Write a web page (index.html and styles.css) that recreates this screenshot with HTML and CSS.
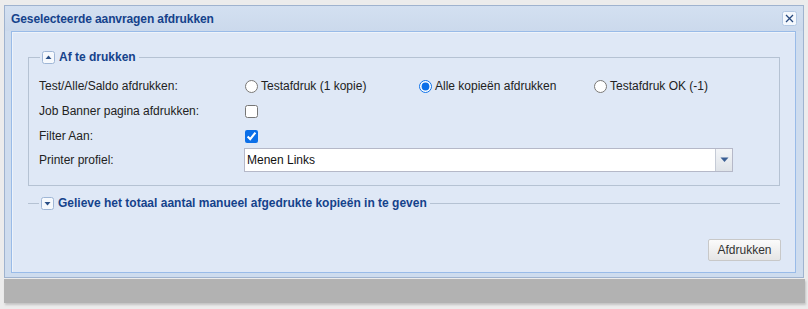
FILE: index.html
```html
<!DOCTYPE html>
<html lang="nl">
<head>
<meta charset="utf-8">
<title>Geselecteerde aanvragen afdrukken</title>
<link rel="stylesheet" href="styles.css">
</head>
<body>
<div class="window">
  <div class="header">
    <span class="title">Geselecteerde aanvragen afdrukken</span>
    <span class="close">
      <svg width="15" height="15" viewBox="0 0 15 15"><rect x="0.5" y="0.5" width="14" height="14" rx="2" fill="#f4f8fd" stroke="#b3c8e3"/><path d="M4 4 L11 11 M11 4 L4 11" stroke="#284a7e" stroke-width="1.3"/></svg>
    </span>
  </div>
  <div class="body">
    <fieldset class="fs">
      <legend class="lg">
        <svg class="tog" width="13" height="13" viewBox="0 0 13 13"><rect x="0.5" y="0.5" width="12" height="12" rx="2" fill="#f6f9fd" stroke="#9fb6d6"/><path d="M3.5 8 L6.5 4.5 L9.5 8 Z" fill="#2a4f86"/></svg>
        <span>Af te drukken</span>
      </legend>
      <div class="form">
        <div class="lbl">Test/Alle/Saldo afdrukken:</div>
        <div class="radios">
          <label class="opt"><input type="radio" name="m"><span>Testafdruk (1 kopie)</span></label>
          <label class="opt"><input type="radio" name="m" checked><span>Alle kopieën afdrukken</span></label>
          <label class="opt"><input type="radio" name="m"><span>Testafdruk OK (-1)</span></label>
        </div>
        <div class="lbl">Job Banner pagina afdrukken:</div>
        <div class="fld"><input type="checkbox" class="cb"></div>
        <div class="lbl">Filter Aan:</div>
        <div class="fld"><input type="checkbox" class="cb" checked></div>
        <div class="lbl">Printer profiel:</div>
        <div class="fld">
          <div class="combo">
            <span class="combo-text">Menen Links</span>
            <span class="trigger"><svg width="9" height="6" viewBox="0 0 9 6"><path d="M0.5 0.5 L4.5 5 L8.5 0.5 Z" fill="#3b5f94"/></svg></span>
          </div>
        </div>
      </div>
    </fieldset>
    <fieldset class="fs collapsed">
      <legend class="lg">
        <svg class="tog" width="13" height="13" viewBox="0 0 13 13"><rect x="0.5" y="0.5" width="12" height="12" rx="2" fill="#f6f9fd" stroke="#9fb6d6"/><path d="M3.5 5 L6.5 8.5 L9.5 5 Z" fill="#2a4f86"/></svg>
        <span>Gelieve het totaal aantal manueel afgedrukte kopieën in te geven</span>
      </legend>
    </fieldset>
    <div class="footer">
      <button class="btn" type="button">Afdrukken</button>
    </div>
  </div>
</div>
<div class="shadow"></div>
</body>
</html>
```
FILE: styles.css
```css
html, body {
  margin: 0;
  padding: 0;
}
body {
  background: #ececec;
  font-family: "Liberation Sans", Arial, sans-serif;
  font-size: 12px;
  color: #222;
  width: 808px;
  height: 309px;
  overflow: hidden;
}
.window {
  margin: 5px 0 0 4px;
  width: 800px;
  height: 273px;
  box-sizing: border-box;
  border: 1px solid #9fb3cf;
  background: #cedcee;
  padding: 0 7px 4px 6px;
  display: flex;
  flex-direction: column;
}
.header {
  height: 25px;
  flex: none;
  display: flex;
  align-items: center;
  justify-content: space-between;
  background: linear-gradient(#d3e0f1, #cbd9ec);
  margin-left: -6px;
  margin-right: -7px;
  padding: 0 6px 0 6px;
}
.title {
  font-weight: bold;
  color: #15428b;
  font-size: 12px;
  letter-spacing: -0.1px;
}
.close {
  display: flex;
  margin-top: 0;
}
.body {
  flex: 1;
  border: 1px solid #99bbe8;
  box-shadow: inset 1px 1px 0 #eef3fa;
  background: #dfe8f6;
  padding: 0 15px 0 16px;
  display: flex;
  flex-direction: column;
}
.fs {
  margin: 18px 0 0 0;
  padding: 10px 0 13px 10px;
  border: 1px solid #b5c2d3;
  min-width: 0;
}
.lg {
  padding: 0 3px 0 2px;
  margin-left: 1px;
  display: flex;
  align-items: center;
  gap: 4px;
  height: 14px;
  font-weight: bold;
  color: #15428b;
  font-size: 12px;
}
.tog {
  display: block;
}
.collapsed {
  margin-top: 10px;
  padding: 0 0 0 10px;
  border-width: 1px 0 0 0;
  height: 0;
}
.form {
  display: grid;
  grid-template-columns: 205px 1fr;
  grid-template-rows: 24px 26px 24px 24px;
  align-items: center;
}
.lbl {
  color: #222;
}
.radios {
  display: grid;
  grid-template-columns: 174px 175px 175px;
}
.opt {
  display: flex;
  align-items: center;
  gap: 3px;
  margin-left: 1px;
}
.opt input {
  margin: 0;
  width: 13px;
  height: 13px;
  accent-color: #0b6fe8;
}
.fld {
  display: flex;
  align-items: center;
}
.cb {
  margin: 0 0 0 1px;
  width: 13px;
  height: 13px;
  accent-color: #0b6fe8;
}
.combo {
  width: 489px;
  height: 24px;
  box-sizing: border-box;
  border: 1px solid #b5b8c8;
  background: #fff;
  display: flex;
  align-items: center;
  justify-content: space-between;
}
.combo-text {
  padding-left: 2px;
  color: #111;
}
.trigger {
  width: 17px;
  height: 22px;
  box-sizing: border-box;
  border-left: 1px solid #c5cbd6;
  background: linear-gradient(#f3f5f8, #dfe3e8);
  display: flex;
  align-items: center;
  justify-content: center;
}
.footer {
  margin-top: auto;
  display: flex;
  justify-content: flex-end;
  padding-bottom: 11px;
  margin-right: -1px;
}
.btn {
  width: 73px;
  height: 22px;
  border: 1px solid #c8c8c8;
  border-radius: 2px;
  background: linear-gradient(#fbfbfb, #e5e5e5);
  font-family: "Liberation Sans", Arial, sans-serif;
  font-size: 12px;
  color: #333;
  padding: 0;
}
.shadow {
  margin: 1px 0 0 4px;
  width: 801px;
  height: 24px;
  background: #b2b2b2;
  box-shadow: 1px 2px 2px #c4c4c4;
}
```
